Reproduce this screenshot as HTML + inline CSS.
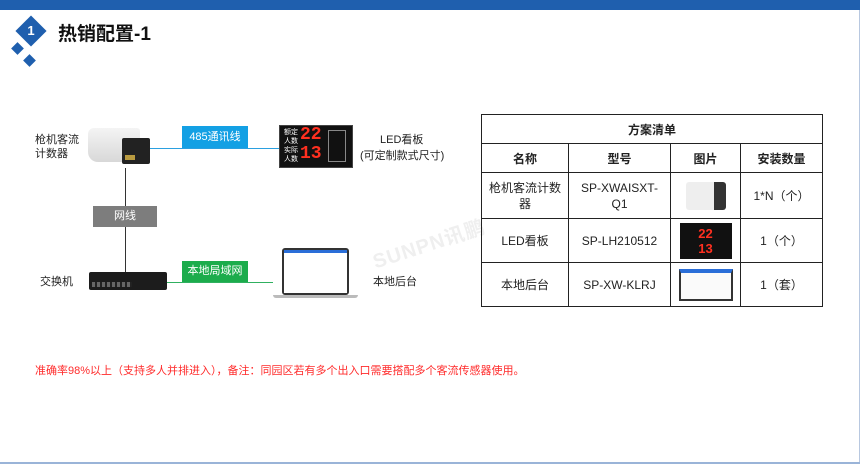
<!DOCTYPE html>
<html><head><meta charset="utf-8"><style>
*{margin:0;padding:0;box-sizing:border-box}
body{width:860px;height:464px;background:#fff;position:relative;overflow:hidden;font-family:"Liberation Sans","Noto Sans CJK SC",sans-serif;color:#222}
.a{position:absolute}
.t{font-size:11px;line-height:14px}
table{position:absolute;left:481px;top:114px;width:342px;border-collapse:collapse;font-size:12px}
td{border:1px solid #222;text-align:center;vertical-align:middle;line-height:16px}
th{border:1px solid #222;font-weight:bold;height:29px;font-size:12px}
</style></head><body>
<div class="a" style="left:0;top:0;width:860px;height:10px;background:#1f5fae"></div>
<div class="a" style="right:0;top:10px;width:1px;height:454px;background:#b8c8e0"></div>
<div class="a" style="left:0;bottom:0;width:860px;height:2px;background:#9ab4d8"></div>
<div class="a" style="left:20px;top:20px;width:22px;height:22px;background:#1f5fae;transform:rotate(45deg)"></div>
<div class="a" style="left:20px;top:20px;width:22px;height:22px;color:#fff;font-weight:bold;font-size:13px;text-align:center;line-height:22px">1</div>
<div class="a" style="left:13px;top:44px;width:9px;height:9px;background:#1f5fae;transform:rotate(45deg)"></div>
<div class="a" style="left:25px;top:56px;width:9px;height:9px;background:#1f5fae;transform:rotate(45deg)"></div>
<div class="a" style="left:58px;top:23px;font-size:19px;font-weight:bold;color:#111;line-height:24px">热销配置-1</div>

<div class="a" style="left:370px;top:228px;font-size:20px;font-weight:bold;color:#efefef;transform:rotate(-18deg);letter-spacing:1px">SUNPN讯鹏</div>

<div class="a t" style="left:35px;top:133px">枪机客流<br>计数器</div>
<div class="a" style="left:88px;top:128px;width:52px;height:34px;background:linear-gradient(#f4f4f4,#d8d8d8);border-radius:6px 3px 3px 10px"></div>
<div class="a" style="left:122px;top:138px;width:28px;height:26px;background:#222;border-radius:2px"></div>
<div class="a" style="left:125px;top:155px;width:10px;height:5px;background:#b89a40"></div>
<div class="a" style="left:125px;top:168px;width:1px;height:104px;background:#333"></div>
<div class="a" style="left:150px;top:148px;width:129px;height:1px;background:#2ba0e0"></div>
<div class="a t" style="left:182px;top:126px;width:66px;height:22px;background:#13a0e4;color:#fff;text-align:center;line-height:22px">485通讯线</div>
<div class="a" style="left:279px;top:125px;width:74px;height:43px;background:#111;border:1px solid #444"></div>
<div class="a" style="left:284px;top:128px;font-size:7px;line-height:9px;color:#fff">额定<br>人数<br>实际<br>人数</div>
<div class="a" style="left:300px;top:126px;font-size:18px;font-weight:bold;line-height:19px;color:#ff3020;font-family:'Liberation Mono',monospace">22<br>13</div>
<div class="a" style="left:328px;top:130px;width:18px;height:32px;border:1px solid #888"></div>
<div class="a t" style="left:380px;top:133px">LED看板</div>
<div class="a t" style="left:360px;top:149px">(可定制款式尺寸)</div>

<div class="a t" style="left:93px;top:206px;width:64px;height:21px;background:#7d7d7d;color:#fff;text-align:center;line-height:21px">网线</div>

<div class="a t" style="left:40px;top:275px">交换机</div>
<div class="a" style="left:89px;top:272px;width:78px;height:18px;background:#1c1c1c;border-radius:2px"></div>
<div class="a" style="left:92px;top:282px;width:40px;height:5px;background:repeating-linear-gradient(90deg,#666 0 3px,#222 3px 5px)"></div>
<div class="a" style="left:167px;top:282px;width:106px;height:1px;background:#30b060"></div>
<div class="a t" style="left:182px;top:261px;width:66px;height:21px;background:#1cac4c;color:#fff;text-align:center;line-height:21px">本地局域网</div>
<div class="a" style="left:282px;top:248px;width:67px;height:47px;background:#ddd;border:2px solid #333;border-radius:3px"></div>
<div class="a" style="left:284px;top:250px;width:63px;height:43px;background:#fff"></div>
<div class="a" style="left:284px;top:250px;width:63px;height:3px;background:#2a6ed8"></div>
<div class="a" style="left:273px;top:295px;width:85px;height:3px;background:#bbb;border-radius:0 0 3px 3px"></div>
<div class="a t" style="left:373px;top:275px">本地后台</div>

<table>
<tr><th colspan="4">方案清单</th></tr>
<tr><th style="width:87px">名称</th><th style="width:102px">型号</th><th style="width:70px">图片</th><th>安装数量</th></tr>
<tr style="height:46px"><td>枪机客流计数<br>器</td><td>SP-XWAISXT-<br>Q1</td><td><div style="margin:auto;width:40px;height:28px;background:linear-gradient(90deg,#eee 70%,#333 70%);border-radius:3px"></div></td><td>1*N（个）</td></tr>
<tr style="height:44px"><td>LED看板</td><td>SP-LH210512</td><td><div style="margin:auto;width:52px;height:36px;background:#111;color:#ff3020;font-weight:bold;font-size:13px;line-height:15px;padding-top:3px">22<br>13</div></td><td>1（个）</td></tr>
<tr style="height:44px"><td>本地后台</td><td>SP-XW-KLRJ</td><td><div style="margin:auto;width:54px;height:32px;border:2px solid #333;border-top:4px solid #2a6ed8;background:#fafafa"></div></td><td>1（套）</td></tr>
</table>

<div class="a" style="left:35px;top:362px;font-size:11px;color:#ff2b2b">准确率98%以上（支持多人并排进入），备注：同园区若有多个出入口需要搭配多个客流传感器使用。</div>
</body></html>
